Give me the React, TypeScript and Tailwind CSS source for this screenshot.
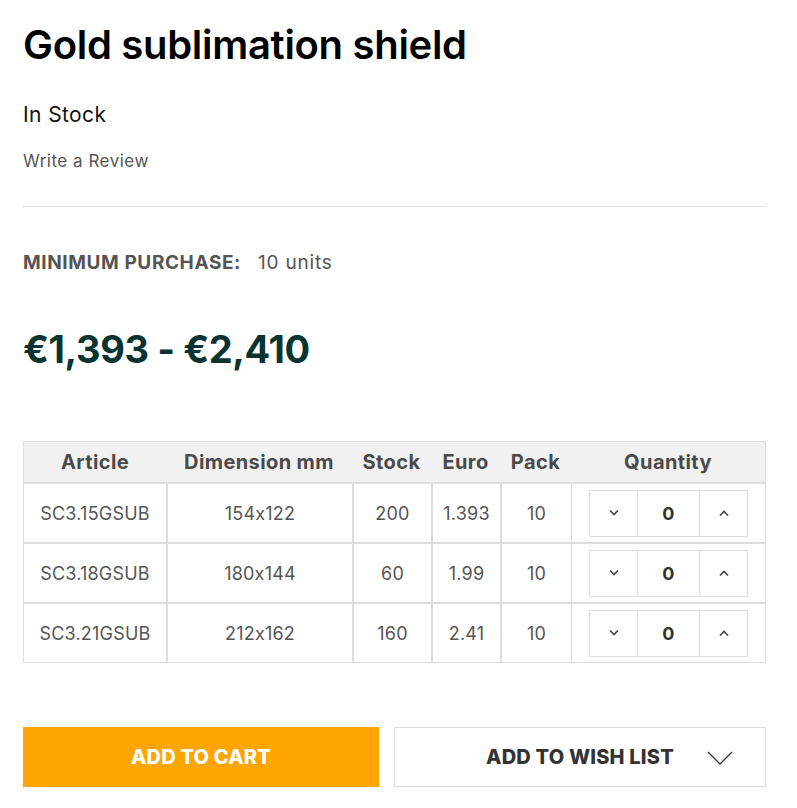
import { useState } from 'react';

interface Article {
  code: string;
  dimension: string;
  stock: number;
  euro: string;
  pack: number;
}

const articles: Article[] = [
  { code: 'SC3.15GSUB', dimension: '154x122', stock: 200, euro: '1.393', pack: 10 },
  { code: 'SC3.18GSUB', dimension: '180x144', stock: 60, euro: '1.99', pack: 10 },
  { code: 'SC3.21GSUB', dimension: '212x162', stock: 160, euro: '2.41', pack: 10 },
];

function Chevron({ up }: { up?: boolean }) {
  return (
    <svg width="10" height="6" viewBox="0 0 10 6" fill="none" stroke="#444" strokeWidth="1.6">
      {up ? <path d="M1 5.5 L5 1.5 L9 5.5" /> : <path d="M1 0.5 L5 4.5 L9 0.5" />}
    </svg>
  );
}

function QuantityStepper() {
  const [qty, setQty] = useState(0);

  return (
    <div className="flex h-[47px] w-[159px] border border-[#dddddd]">
      <button
        className="flex w-[47px] items-center justify-center"
        onClick={() => setQty(Math.max(0, qty - 1))}
      >
        <Chevron />
      </button>
      <div className="flex w-[63px] items-center justify-center border-x border-[#dddddd] text-[18px] font-bold text-[#333]">
        {qty}
      </div>
      <button
        className="flex flex-1 items-center justify-center"
        onClick={() => setQty(qty + 1)}
      >
        <Chevron up />
      </button>
    </div>
  );
}

export default function App() {
  const cell = 'flex items-center justify-center border-t-2 border-[#dddddd]';

  return (
    <div className="min-h-[808px] bg-white font-['Inter','Liberation_Sans',sans-serif] [font-feature-settings:'calt'_0]">
      <div className="ml-[23px] w-[743px] pt-[21px]">
        <h1 className="text-[40px] font-semibold leading-[48px] tracking-[-0.3px] text-black">
          Gold sublimation shield
        </h1>

        <p className="mt-[32px] text-[21px] leading-[28px] tracking-[0.4px] text-[#111]">In Stock</p>

        <a href="#" className="mt-[20px] block text-[17px] leading-[24px] tracking-[0.5px] text-[#555]">
          Write a Review
        </a>

        <div className="mt-[33px] border-t border-[#dddddd]" />

        {/* Minimum purchase */}
        <div className="mt-[42px] flex items-center gap-[17px] text-[19px] leading-[28px] text-[#545454]">
          <span className="font-bold tracking-[0.6px]">MINIMUM PURCHASE:</span>
          <span className="tracking-[0.8px]">10 units</span>
        </div>

        {/* Price */}
        <div className="mt-[48px] text-[38px] font-bold leading-[48px] tracking-[-0.4px] text-[#0a3431]">
          €1,393 - €2,410
        </div>

        {/* Article table */}
        <div className="mt-[68px] grid grid-cols-[142px_186px_79px_69px_71px_1fr] border border-[#dddddd] text-[18px] tracking-[0.2px] text-[#555]">
          {['Article', 'Dimension mm', 'Stock', 'Euro', 'Pack', 'Quantity'].map((h) => (
            <div
              key={h}
              className="flex h-[40px] items-center justify-center bg-[#f1f1f1] text-[20px] font-bold tracking-[0.4px] text-[#4a4a4a]"
            >
              {h}
            </div>
          ))}

          {articles.map((a) => (
            <div key={a.code} className="contents">
              <div className={`${cell} h-[60px]`}>{a.code}</div>
              <div className={`${cell} border-l-2`}>{a.dimension}</div>
              <div className={`${cell} border-l-2`}>{a.stock}</div>
              <div className={`${cell} border-l-2`}>{a.euro}</div>
              <div className={`${cell} border-l-2`}>{a.pack}</div>
              <div className={`${cell} border-l`}>
                <QuantityStepper />
              </div>
            </div>
          ))}
        </div>

        {/* Actions */}
        <div className="mt-[64px] flex gap-[15px]">
          <button className="h-[60px] w-[356px] bg-[#ffa500] text-[20px] font-extrabold tracking-[0.2px] text-white">
            ADD TO CART
          </button>
          <button className="relative h-[60px] flex-1 border border-[#dddddd] text-[20px] font-extrabold tracking-[0.2px] text-[#333]">
            ADD TO WISH LIST
            <svg
              className="absolute right-[32px] top-[23px]"
              width="26"
              height="14"
              viewBox="0 0 26 14"
              fill="none"
              stroke="#333"
              strokeWidth="1.3"
            >
              <path d="M1 1 L13 13 L25 1" />
            </svg>
          </button>
        </div>
      </div>
    </div>
  );
}
